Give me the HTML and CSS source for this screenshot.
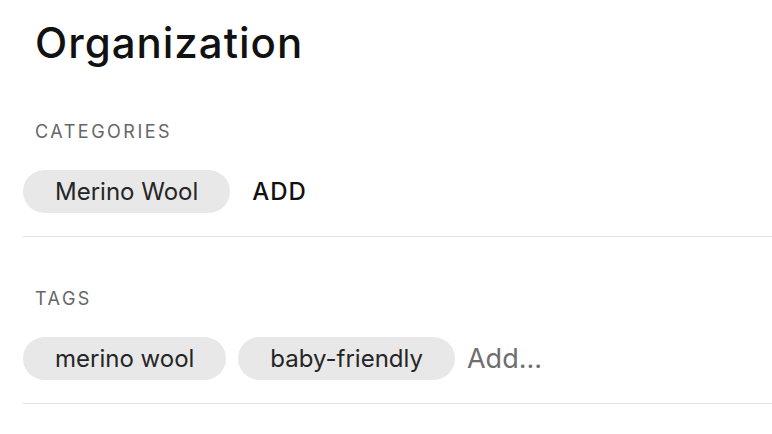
FILE: index.html
```html
<!DOCTYPE html>
<html lang="en">
<head>
    <meta charset="UTF-8">
    <meta name="viewport" content="width=device-width, initial-scale=1.0">
    <title>Organization</title>
    <link rel="stylesheet" href="styles.css">
</head>
<body>
    <div class="panel">
        <h1>Organization</h1>

        <div class="section">
            <div class="label">CATEGORIES</div>
            <div class="chips">
                <span class="chip">Merino Wool</span>
                <button class="add-btn">ADD</button>
            </div>
        </div>

        <div class="section">
            <div class="label">TAGS</div>
            <div class="chips">
                <span class="chip">merino wool</span>
                <span class="chip">baby-friendly</span>
                <input class="tag-input" type="text" placeholder="Add...">
            </div>
        </div>
    </div>
</body>
</html>
```

FILE: styles.css
```css
body {
    font-family: Inter, "Liberation Sans", sans-serif;
    background-color: #fff;
    margin: 0;
    padding: 0;
}

.panel {
    padding: 20px 0 0 23px;
}

h1 {
    margin: 0 0 4px 12px;
    font-size: 42px;
    line-height: 46px;
    font-weight: 500;
    letter-spacing: 1px;
    color: #111;
}

.section {
    padding: 50px 0 23px;
    border-bottom: 1px solid #e2e2e2;
}

.label {
    margin: 2px 0 28px 12px;
    font-size: 18px;
    line-height: 20px;
    letter-spacing: 2.5px;
    color: #666;
}

.chips {
    display: flex;
    align-items: center;
    gap: 12px;
}

.chip {
    display: flex;
    align-items: center;
    height: 43px;
    padding: 0 32px;
    border-radius: 22px;
    background-color: #e8e8e8;
    font-size: 24px;
    color: #252525;
}

.add-btn {
    margin-left: 10px;
    padding: 0;
    border: none;
    background: none;
    font-family: inherit;
    font-size: 24px;
    font-weight: 500;
    letter-spacing: 1px;
    color: #111;
}

.tag-input {
    width: 200px;
    padding: 0;
    border: none;
    outline: none;
    font-family: inherit;
    font-size: 27px;
    color: #333;
}

.tag-input::placeholder {
    color: #6e6e6e;
}
```
